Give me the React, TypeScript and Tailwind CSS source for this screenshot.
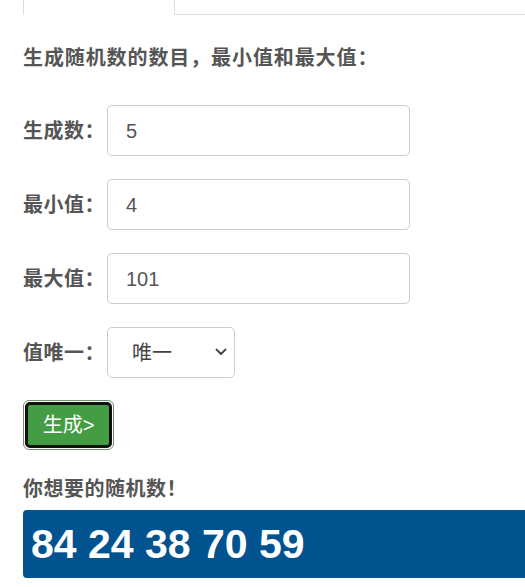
import React from "react";

export default function App() {
  const font = "font-['Liberation_Sans','Noto_Sans_CJK_SC',sans-serif]";
  const rows = [
    { label: "生成数：", value: "5" },
    { label: "最小值：", value: "4" },
    { label: "最大值：", value: "101" },
  ];
  return (
    <div className={`w-[525px] h-[587px] overflow-hidden bg-white text-[#555] ${font}`}>
      <div className="flex h-[15px] pl-[23px]">
        <div className="w-[152px] border-x border-[#ddd]" />
        <div className="flex-1 border-b border-[#ddd]" />
      </div>
      <div className="pl-[23px] flex flex-col">
        <div className="mt-[28px] text-[20px] leading-[30px] font-bold tracking-[0.9px]">
          生成随机数的数目，最小值和最大值：
        </div>
        <div className="mt-[32px] flex flex-col gap-[23px]">
          {rows.map((r) => (
            <div key={r.label} className="flex items-center">
              <div className="w-[84px] text-[20px] font-bold leading-[30px] tracking-[0.5px]">{r.label}</div>
              <div className="w-[303px] h-[51px] border border-[#ccc] rounded-[5px] flex items-center pl-[18px] text-[20px] text-[#555]">
                {r.value}
              </div>
            </div>
          ))}
          <div className="flex items-center">
            <div className="w-[84px] text-[20px] font-bold leading-[30px] tracking-[0.5px]">值唯一：</div>
            <div className="w-[128px] h-[51px] border border-[#ccc] rounded-[5px] flex items-center justify-between pl-[24px] pr-[7px] text-[20px] text-[#444]">
              <span>唯一</span>
              <svg width="12" height="8" viewBox="0 0 12 8" className="mb-[1px]">
                <path d="M1.5 1.5 L6 6 L10.5 1.5" fill="none" stroke="#444" strokeWidth="1.8" strokeLinecap="round" strokeLinejoin="round" />
              </svg>
            </div>
          </div>
        </div>
        <div className="mt-[22px] w-[91px] h-[50px] rounded-[6px] border border-[#6f8f6f] p-[1px] bg-white">
          <div className="w-full h-full rounded-[5px] border-[3px] border-[#111] bg-[#449d44] flex items-center justify-center text-white text-[20px]">
            生成&gt;
          </div>
        </div>
        <div className="mt-[24px] text-[20px] leading-[30px] font-bold tracking-[0.5px]">你想要的随机数！</div>
        <div className="mt-[6px] w-[520px] h-[68px] rounded-[4px] bg-[#01538f] flex items-center pl-[8px] text-white text-[41px] font-bold leading-none">
          84 24 38 70 59
        </div>
      </div>
    </div>
  );
}
